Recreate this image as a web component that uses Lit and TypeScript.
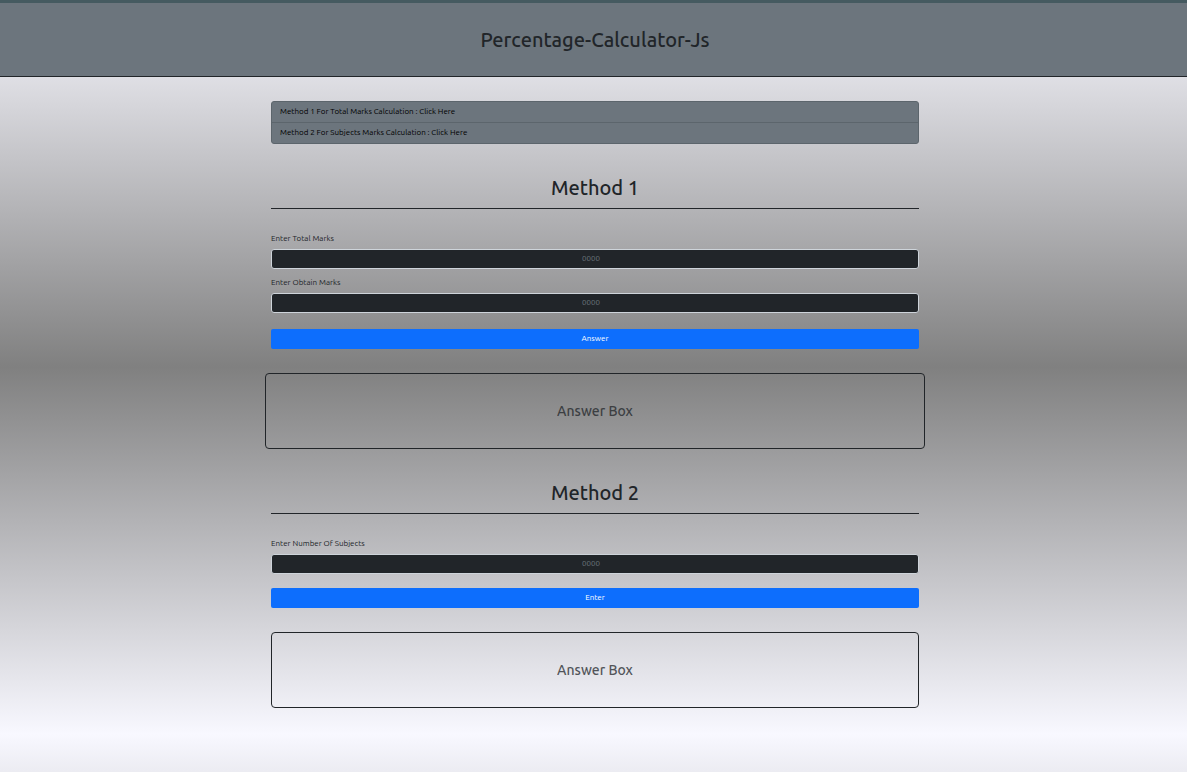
import { LitElement, html, css } from "lit";
import { customElement, property, state } from "lit/decorators.js";

const base = css`
  *,
  *::before,
  *::after {
    box-sizing: border-box;
  }
  h1,
  h2,
  p {
    margin: 0;
    font-weight: 500;
  }
`;

@customElement("marks-field")
class MarksField extends LitElement {
  @property() label = "";

  static styles = [
    base,
    css`
      :host {
        display: flex;
        flex-direction: column;
        gap: 4px;
      }
      .label {
        line-height: 12px;
      }
      .input {
        width: 100%;
        height: 20px;
        padding: 2px 14px 4px 6px;
        border: 1px solid #ced4da;
        border-radius: 3px;
        background: #212529;
        color: #ffffff;
        font: inherit;
        line-height: 12px;
        text-align: center;
        appearance: textfield;
      }
      .input::placeholder {
        color: #6c757d;
        opacity: 1;
      }
      .input::-webkit-inner-spin-button {
        appearance: none;
        margin: 0;
      }
    `,
  ];

  render() {
    return html`
      <label class="label" for="value">${this.label}</label>
      <input class="input" id="value" type="number" placeholder="0000" />
    `;
  }

  get value() {
    return Number(this.renderRoot.querySelector("input")?.value);
  }
}

@customElement("app-root")
class AppRoot extends LitElement {
  @state() first = "Answer Box";
  @state() second = "Answer Box";

  static styles = [
    base,
    css`
      :host {
        --inset: 3px;
        display: block;
        min-height: 100vh;
        background: linear-gradient(#f8f8ff, #808080, #f8f8ff) 0 0 / 100% 734px;
        color: #212529;
        font-family: Ubuntu, "Noto Sans", sans-serif;
        font-size: 8px;
        font-weight: 400;
      }
      .header {
        padding: 24px 0 24px var(--inset);
        border-top: 3px solid #455a60;
        border-bottom: 1px solid #212529;
        background: #6c757d;
        text-align: center;
      }
      .title,
      .heading {
        font-size: 20px;
        line-height: 24px;
      }
      .title {
        line-height: 25px;
      }
      .main {
        padding: 24px 0 24px var(--inset);
      }
      .container {
        display: flex;
        flex-direction: column;
        gap: 32px;
        max-width: 660px;
        margin: 0 auto;
        padding: 0 6px;
      }
      .menu {
        display: flex;
        flex-direction: column;
        border: 1px solid #5c656c;
        border-radius: 3px;
        background: #6c757d;
        overflow: hidden;
      }
      .link {
        padding: 4px 8px;
        color: #000000;
        line-height: 12px;
        text-decoration: none;
      }
      .link + .link {
        border-top: 1px solid #5c656c;
      }
      .method {
        display: flex;
        flex-direction: column;
      }
      .heading {
        padding-bottom: 8px;
        border-bottom: 1px solid #212529;
        text-align: center;
      }
      .fields {
        display: flex;
        flex-direction: column;
        gap: 8px;
        margin: 24px 0 16px;
      }
      .fields.single {
        margin-bottom: 14px;
      }
      .button {
        height: 20px;
        padding: 0 6px;
        border: 0;
        border-radius: 2px;
        background: #0d6efd;
        color: #ffffff;
        font: inherit;
        line-height: 12px;
        cursor: pointer;
      }
      .answer {
        margin-top: 24px;
        padding: 28px 8px;
        border: 1px solid #212529;
        border-radius: 4px;
        text-align: center;
      }
      .answer.wide {
        margin-left: -6px;
        margin-right: -6px;
      }
      .result {
        font-size: 14px;
        line-height: 18px;
        opacity: 0.75;
      }
    `,
  ];

  private fieldValues(section: string): number[] {
    return [...this.renderRoot.querySelectorAll<MarksField>(`#${section} marks-field`)].map((f) => f.value);
  }

  private calculate() {
    const [total, obtained] = this.fieldValues("method1");
    this.first = total > 0 ? `${((obtained / total) * 100).toFixed(2)} %` : "Answer Box";
  }

  private enter() {
    const [count] = this.fieldValues("method2");
    this.second = count > 0 ? `${count}` : "Answer Box";
  }

  render() {
    return html`
      <header class="header"><h1 class="title">Percentage-Calculator-Js</h1></header>
      <main class="main">
        <div class="container">
          <nav class="menu">
            <a class="link" href="#method1">Method 1 For Total Marks Calculation : Click Here</a>
            <a class="link" href="#method2">Method 2 For Subjects Marks Calculation : Click Here</a>
          </nav>
          <section class="method" id="method1">
            <h2 class="heading">Method 1</h2>
            <div class="fields">
              <marks-field label="Enter Total Marks"></marks-field>
              <marks-field label="Enter Obtain Marks"></marks-field>
            </div>
            <button class="button" type="button" @click=${this.calculate}>Answer</button>
            <div class="answer wide"><p class="result">${this.first}</p></div>
          </section>
          <section class="method" id="method2">
            <h2 class="heading">Method 2</h2>
            <div class="fields single">
              <marks-field label="Enter Number Of Subjects"></marks-field>
            </div>
            <button class="button" type="button" @click=${this.enter}>Enter</button>
            <div class="answer"><p class="result">${this.second}</p></div>
          </section>
        </div>
      </main>
    `;
  }
}
